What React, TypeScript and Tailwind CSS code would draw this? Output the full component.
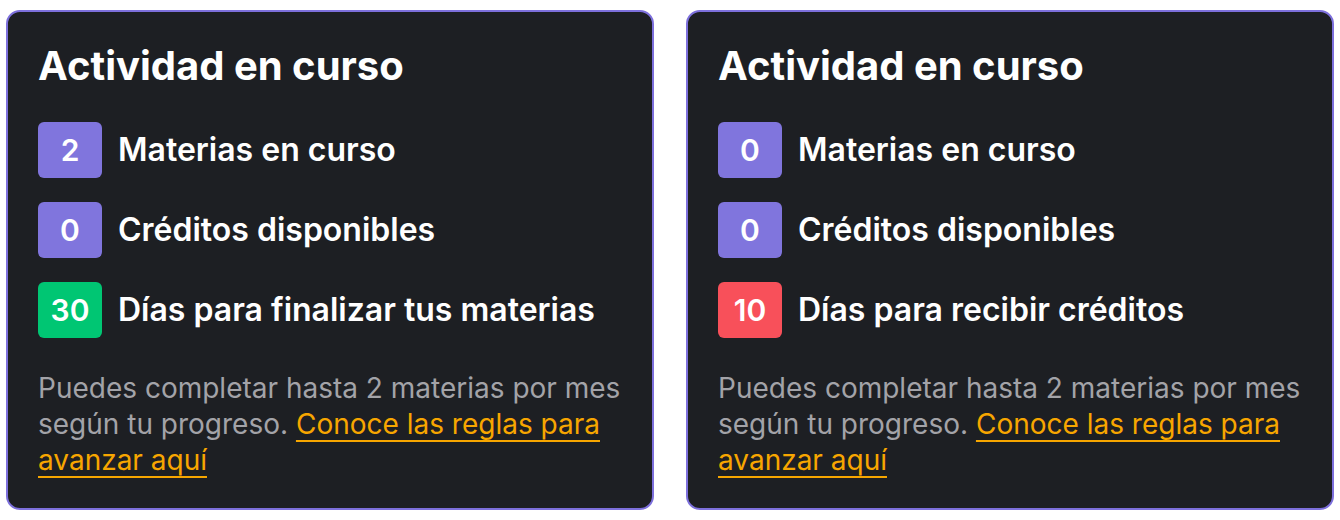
import React from "react";

type Row = { value: string; label: string; color: string };

const cards: { rows: Row[] }[] = [
  {
    rows: [
      { value: "2", label: "Materias en curso", color: "bg-[#8075dd]" },
      { value: "0", label: "Créditos disponibles", color: "bg-[#8075dd]" },
      { value: "30", label: "Días para finalizar tus materias", color: "bg-[#00c673]" },
    ],
  },
  {
    rows: [
      { value: "0", label: "Materias en curso", color: "bg-[#8075dd]" },
      { value: "0", label: "Créditos disponibles", color: "bg-[#8075dd]" },
      { value: "10", label: "Días para recibir créditos", color: "bg-[#f8505a]" },
    ],
  },
];

function Card({ rows }: { rows: Row[] }) {
  return (
    <div className="flex-1 h-[500px] rounded-[14px] border-2 border-[#7d70dc] bg-[#1d1f23] px-[30px] pt-[30px]">
      <h2 className="text-[40px] leading-[48px] font-bold text-white">
        Actividad en curso
      </h2>
      <div className="mt-8 flex flex-col gap-6">
        {rows.map((r, i) => (
          <div key={i} className="flex items-center gap-4">
            <div
              className={`${r.color} w-16 h-14 rounded-[6px] flex items-center justify-center text-white text-[30px] font-semibold`}
            >
              {r.value}
            </div>
            <div className="text-white text-[32px] leading-[40px] font-semibold">{r.label}</div>
          </div>
        ))}
      </div>
      <p className="mt-8 text-[28px] leading-[36px] text-[#a3a3a8]">
        Puedes completar hasta 2 materias por mes según tu progreso.{" "}
        <a className="text-[#f7a600] underline underline-offset-[6px] decoration-2">
          Conoce las reglas para avanzar aquí
        </a>
      </p>
    </div>
  );
}

export default function App() {
  return (
    <div
      className="w-[1340px] h-[520px] bg-white flex gap-8 px-[6px] pt-[10px]"
      style={{ fontFamily: "Inter, 'Noto Sans', sans-serif" }}
    >
      {cards.map((c, i) => (
        <Card key={i} rows={c.rows} />
      ))}
    </div>
  );
}
